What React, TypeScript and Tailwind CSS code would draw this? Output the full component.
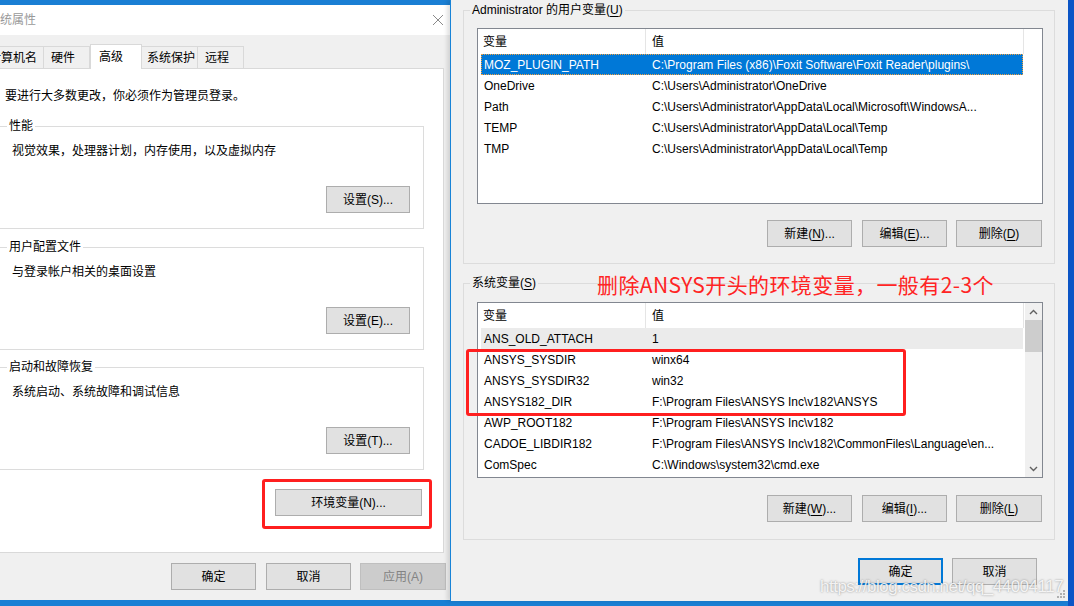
import React from "react";

const userVars: [string, string][] = [
  ["MOZ_PLUGIN_PATH", "C:\\Program Files (x86)\\Foxit Software\\Foxit Reader\\plugins\\"],
  ["OneDrive", "C:\\Users\\Administrator\\OneDrive"],
  ["Path", "C:\\Users\\Administrator\\AppData\\Local\\Microsoft\\WindowsA..."],
  ["TEMP", "C:\\Users\\Administrator\\AppData\\Local\\Temp"],
  ["TMP", "C:\\Users\\Administrator\\AppData\\Local\\Temp"],
];

const sysVars: [string, string][] = [
  ["ANS_OLD_ATTACH", "1"],
  ["ANSYS_SYSDIR", "winx64"],
  ["ANSYS_SYSDIR32", "win32"],
  ["ANSYS182_DIR", "F:\\Program Files\\ANSYS Inc\\v182\\ANSYS"],
  ["AWP_ROOT182", "F:\\Program Files\\ANSYS Inc\\v182"],
  ["CADOE_LIBDIR182", "F:\\Program Files\\ANSYS Inc\\v182\\CommonFiles\\Language\\en..."],
  ["ComSpec", "C:\\Windows\\system32\\cmd.exe"],
];

const tabs = [
  { label: "计算机名", w: "w-[61px]", pl: "pl-[5px]" },
  { label: "硬件", w: "w-[47px]", pl: "pl-[7px]" },
  { label: "高级", w: "w-[52px]", pl: "pl-[8px]", active: true },
  { label: "系统保护", w: "w-[57px]", pl: "pl-[5px]" },
  { label: "远程", w: "w-[47px]", pl: "pl-[7px]" },
];

function WinButton({
  children,
  className = "",
  disabled,
  primary,
}: {
  children: React.ReactNode;
  className?: string;
  disabled?: boolean;
  primary?: boolean;
}) {
  return (
    <div
      className={`h-[27px] flex items-center justify-center text-[12px] ${
        disabled
          ? "bg-[#cccccc] border border-[#bfbfbf] text-[#838383]"
          : primary
          ? "bg-[#e1e1e1] border-2 border-[#0078d7] text-black"
          : "bg-[#e1e1e1] border border-[#adadad] text-black"
      } ${className}`}
    >
      {children}
    </div>
  );
}

function Key({ k }: { k: string }) {
  return <span className="underline underline-offset-2">{k}</span>;
}

function GroupBox({
  title,
  text,
  button,
  mt,
}: {
  title: string;
  text: string;
  button: string;
  mt: string;
}) {
  return (
    <div className={`border border-[#dcdcdc] pb-[15px] ${mt}`}>
      <div className="-mt-[9px] ml-[7px] w-fit bg-white px-[2px] leading-[16px]">{title}</div>
      <div className="mt-[9px] pl-[12px] leading-[16px]">{text}</div>
      <div className="mt-[27px] flex justify-end pr-[13px]">
        <WinButton className="w-[84px]">{button}</WinButton>
      </div>
    </div>
  );
}

function Chevron({ up }: { up?: boolean }) {
  return (
    <svg width="9" height="6" viewBox="0 0 9 6">
      <path
        d={up ? "M1 5 L4.5 1.5 L8 5" : "M1 1 L4.5 4.5 L8 1"}
        fill="none"
        stroke="#606060"
        strokeWidth="1.4"
      />
    </svg>
  );
}

function ListView({
  rows,
  selected,
  softSelected,
  scrollbar,
}: {
  rows: [string, string][];
  selected?: number;
  softSelected?: number;
  scrollbar?: boolean;
}) {
  return (
    <div className="w-[566px] h-[176px] border border-[#828790] bg-white flex">
      <div className="flex-1 min-w-0">
        <div className="flex h-[25px] items-center">
          <div className="w-[168px] h-full border-r border-[#e5e5e5] pl-[5px] flex items-center">变量</div>
          <div className="w-[378px] h-full border-r border-[#e5e5e5] pl-[6px] flex items-center">值</div>
        </div>
        {rows.map(([name, value], i) => (
          <div
            key={name}
            className={`ml-[3px] w-[542px] h-[21px] flex items-center whitespace-nowrap ${
              i === selected
                ? "bg-[#0078d7] text-white outline outline-1 outline-dotted outline-[#f0a040] -outline-offset-1"
                : i === softSelected
                ? "bg-[#ebebeb]"
                : ""
            }`}
          >
            <div className="w-[165px] pl-[3px] overflow-hidden">{name}</div>
            <div className="flex-1 pl-[6px] overflow-hidden">{value}</div>
          </div>
        ))}
      </div>
      {scrollbar && (
        <div className="w-[17px] bg-[#f0f0f0] flex flex-col">
          <div className="h-[17px] flex items-center justify-center">
            <Chevron up />
          </div>
          <div className="h-[32px] bg-[#cdcdcd]" />
          <div className="flex-1" />
          <div className="h-[17px] flex items-center justify-center">
            <Chevron />
          </div>
        </div>
      )}
    </div>
  );
}

export default function App() {
  return (
    <div className="relative w-[1074px] h-[606px] overflow-hidden bg-[#1a7fd4] text-[12px] text-black font-['Liberation_Sans','Noto_Sans_CJK_SC',sans-serif]">
      {/* 系统属性 (inactive, behind) */}
      <div className="absolute left-[-24px] top-[5px] w-[486px] h-[595px] bg-[#f0f0f0] flex flex-col">
        <div className="h-[30px] bg-white flex items-center justify-between pl-[12px] pr-[19px] text-[#999999]">
          <span>系统属性</span>
          <svg width="10" height="10" viewBox="0 0 10 10">
            <path d="M0 0 L10 10 M10 0 L0 10" stroke="#8a8a8a" strokeWidth="1" />
          </svg>
        </div>

        <div className="mt-[9px] ml-[7px] flex items-end h-[25px] -mb-[1px] relative z-10">
          {tabs.map((t) =>
            t.active ? (
              <div
                key={t.label}
                className={`${t.w} ${t.pl} h-[25px] bg-white border border-b-0 border-[#d9d9d9] pt-[4px] leading-[16px]`}
              >
                {t.label}
              </div>
            ) : (
              <div
                key={t.label}
                className={`${t.w} ${t.pl} h-[22px] mb-[1px] border border-b-0 border-[#d9d9d9] -ml-px first:ml-0 flex items-center`}
              >
                {t.label}
              </div>
            )
          )}
        </div>

        <div className="ml-[7px] w-[461px] h-[485px] border border-[#d9d9d9] bg-white pt-[19px] pl-[15px] pr-[19px] flex flex-col">
          <div className="pl-[6px] leading-[16px]">要进行大多数更改，你必须作为管理员登录。</div>
          <GroupBox mt="mt-[22px]" title="性能" text="视觉效果，处理器计划，内存使用，以及虚拟内存" button="设置(S)..." />
          <GroupBox mt="mt-[18px]" title="用户配置文件" text="与登录帐户相关的桌面设置" button="设置(E)..." />
          <GroupBox mt="mt-[17px]" title="启动和故障恢复" text="系统启动、系统故障和调试信息" button="设置(T)..." />
          <div className="mt-[19px] flex justify-end pr-[2px]">
            <div className="relative">
              <WinButton className="w-[147px] h-[26px]">环境变量(N)...</WinButton>
              <div className="absolute -left-[13px] -top-[10px] -right-[10px] -bottom-[13px] border-[3px] border-[#ff1f1f] rounded-[3px]" />
            </div>
          </div>
        </div>

        <div className="mt-[10px] flex justify-end gap-[9px] pr-[16px]">
          <WinButton className="w-[85px] mr-[1px]">确定</WinButton>
          <WinButton className="w-[85px]">取消</WinButton>
          <WinButton className="w-[86px]" disabled>
            应用(A)
          </WinButton>
        </div>
      </div>

      {/* 环境变量 (active) */}
      <div className="absolute left-[450px] top-0 w-[618px] h-[601px] bg-[#f0f0f0] border-l border-[#1883d7] shadow-[-3px_0_4px_rgba(0,0,0,0.12)] flex flex-col z-10">
        <div className="ml-[12px] w-[592px] mt-[10px] border border-[#dcdcdc] pb-[16px]">
          <div className="-mt-[9px] ml-[6px] w-fit bg-[#f0f0f0] px-[2px] leading-[16px]">
            Administrator 的用户变量(<Key k="U" />)
          </div>
          <div className="mt-[10px] ml-[13px]">
            <ListView rows={userVars} selected={0} />
          </div>
          <div className="mt-[16px] flex justify-end gap-[10px] pr-[12px]">
            <WinButton className="w-[85px]">
              新建(<Key k="N" />)...
            </WinButton>
            <WinButton className="w-[85px] mr-[-1px]">
              编辑(<Key k="E" />)...
            </WinButton>
            <WinButton className="w-[86px]">
              删除(<Key k="D" />)
            </WinButton>
          </div>
        </div>

        <div className="relative ml-[12px] w-[592px] mt-[19px] border border-[#dcdcdc] pb-[17px]">
          <div className="-mt-[9px] ml-[6px] w-fit bg-[#f0f0f0] px-[2px] leading-[16px]">
            系统变量(<Key k="S" />)
          </div>
          <div className="absolute left-[133px] -top-[14px] text-[21px] leading-[28px] tracking-[0.4px] text-[#ff2424] font-['Noto_Sans_CJK_SC',sans-serif] whitespace-nowrap">
            删除ANSYS开头的环境变量，一般有2-3个
          </div>
          <div className="relative mt-[11px] ml-[13px] w-fit">
            <ListView rows={sysVars} softSelected={0} scrollbar />
            <div className="absolute left-[-11px] top-[47px] w-[440px] h-[67px] border-[3px] border-[#ff1f1f] rounded-[3px]" />
          </div>
          <div className="mt-[17px] flex justify-end gap-[10px] pr-[12px]">
            <WinButton className="w-[85px]">
              新建(<Key k="W" />)...
            </WinButton>
            <WinButton className="w-[85px] mr-[-1px]">
              编辑(<Key k="I" />)...
            </WinButton>
            <WinButton className="w-[86px]">
              删除(<Key k="L" />)
            </WinButton>
          </div>
        </div>

        <div className="mt-[18px] flex justify-end gap-[9px] pr-[31px]">
          <WinButton className="w-[85px]" primary>
            确定
          </WinButton>
          <WinButton className="w-[85px]">取消</WinButton>
        </div>

        <svg className="absolute right-[3px] bottom-[3px]" width="9" height="9" viewBox="0 0 9 9">
          {[
            [7, 1],
            [4, 4],
            [7, 4],
            [1, 7],
            [4, 7],
            [7, 7],
          ].map(([x, y]) => (
            <rect key={`${x}-${y}`} x={x} y={y} width="2" height="2" fill="#b0b0b0" />
          ))}
        </svg>
      </div>

      {/* 右侧桌面 */}
      <div className="absolute right-0 top-0 w-[6px] h-full bg-[#0b55c6]" />

      {/* 水印 */}
      <div className="absolute left-[820px] top-[577px] z-20 text-[17px] leading-[20px] tracking-[-0.5px] text-white/85 [text-shadow:0_0_2px_rgba(90,90,90,0.7)] font-['Liberation_Sans',sans-serif] whitespace-nowrap">
        https://blog.csdn.net/qq_44004117
      </div>
    </div>
  );
}
